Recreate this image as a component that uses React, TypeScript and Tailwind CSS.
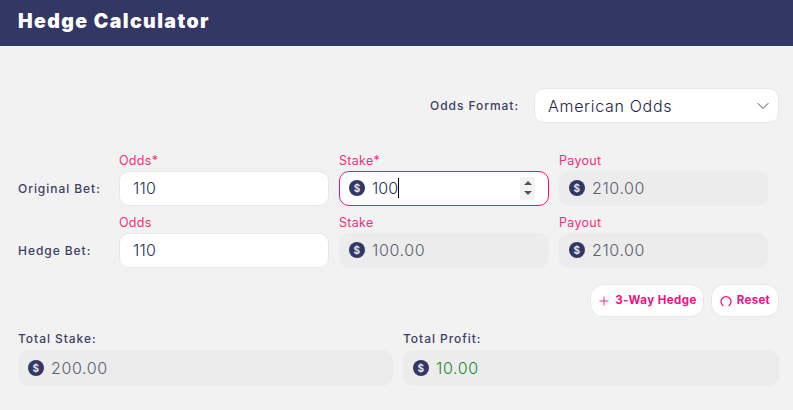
import React from 'react';
import { ChevronDown, Plus } from 'lucide-react';

const font = "font-['Inter','Liberation_Sans',sans-serif]";

const DollarIcon = () => (
  <span className="flex h-4 w-4 flex-none items-center justify-center rounded-full bg-[#333763] text-[10px] font-bold leading-none text-[#e4e5ee]">
    $
  </span>
);

const FieldLabel = ({ children }: { children: React.ReactNode }) => (
  <div className="mb-[3px] h-[14px] text-[12.5px] leading-[13px] tracking-[0.3px] text-[#f0307f]">{children}</div>
);

const OddsInput = ({ label, value }: { label: string; value: string }) => (
  <div className="w-[210px]">
    <FieldLabel>{label}</FieldLabel>
    <div className="flex h-[35px] items-center rounded-[10px] border border-[#e8e8e8] bg-white pb-[1px] pl-[13px] text-[16px] font-light tracking-[0.2px] text-[#2c2f52]">
      {value}
    </div>
  </div>
);

const ReadOnly = ({ label, value, width }: { label: string; value: string; width: string }) => (
  <div className={width}>
    <FieldLabel>{label}</FieldLabel>
    <div className="flex h-[35px] items-center gap-[7px] rounded-[10px] bg-[#ececec] pb-[1px] pl-[10px] text-[16px] font-light tracking-[0.6px] text-[#5c606c]">
      <DollarIcon />
      {value}
    </div>
  </div>
);

const Total = ({ label, value, color, width }: { label: string; value: string; color: string; width: string }) => (
  <div className={width}>
    <div className="mb-[4px] h-[14px] text-[12px] font-medium leading-[14px] tracking-[0.95px] text-[#3d4060]">{label}</div>
    <div className={`flex h-[36px] items-center gap-[7px] rounded-[10px] bg-[#ececec] pb-[1px] pl-[10px] text-[16px] font-light tracking-[0.6px] ${color}`}>
      <DollarIcon />
      {value}
    </div>
  </div>
);

const RowLabel = ({ children }: { children: React.ReactNode }) => (
  <div className="flex h-[35px] w-[101px] flex-none items-center text-[12px] font-medium tracking-[0.95px] text-[#3d4060]">
    {children}
  </div>
);

export default function App() {
  return (
    <div className={`${font} h-[410px] w-[793px] overflow-hidden bg-[#f2f2f2]`}>
      <header className="flex h-[46px] items-center bg-[#333763] pb-[2px] pl-[18px] text-[19.5px] font-black tracking-[1.4px] text-white">
        Hedge Calculator
      </header>

      <div className="pl-[18px] pr-[14px] pt-[42px]">
        <div className="flex items-center justify-end">
          <span className="mr-[15px] text-[12px] font-medium tracking-[0.95px] text-[#3d4060]">Odds Format:</span>
          <div className="flex h-[35px] w-[245px] items-center justify-between rounded-[10px] border border-[#e8e8e8] bg-white pl-[13px] pr-[5px] text-[16px] font-light tracking-[0.7px] text-[#1f2245]">
            American Odds
            <ChevronDown size={20} strokeWidth={1.2} className="text-[#4a4d6a]" />
          </div>
        </div>

        <div className="mt-[31px] flex items-end">
          <RowLabel>Original Bet:</RowLabel>
          <div className="flex gap-[10px]">
            <OddsInput label="Odds*" value="110" />
            <div className="w-[210px]">
              <FieldLabel>Stake*</FieldLabel>
              <div className="flex h-[35px] items-center justify-between rounded-[10px] border-[1.5px] border-[#f0107f] bg-white pb-[1px] pl-[9px] pr-[13px] text-[16px] font-light text-[#2c2f52]">
                <div className="flex items-center gap-[7px]">
                  <DollarIcon />
                  <span className="border-r border-black leading-[20px]">100</span>
                </div>
                <div className="flex h-[23px] w-[15px] flex-col items-center justify-center gap-[6px] bg-[#f2f2f2]">
                  <span className="h-0 w-0 border-x-[4px] border-b-[4px] border-x-transparent border-b-[#555555]" />
                  <span className="h-0 w-0 border-x-[4px] border-t-[4px] border-x-transparent border-t-[#555555]" />
                </div>
              </div>
            </div>
            <ReadOnly label="Payout" value="210.00" width="w-[209px]" />
          </div>
        </div>

        <div className="mt-[10px] flex items-end">
          <RowLabel>Hedge Bet:</RowLabel>
          <div className="flex gap-[10px]">
            <OddsInput label="Odds" value="110" />
            <ReadOnly label="Stake" value="100.00" width="w-[210px]" />
            <ReadOnly label="Payout" value="210.00" width="w-[209px]" />
          </div>
        </div>

        <div className="mt-[16px] flex justify-end gap-[7px]">
          <button className="flex h-[33px] w-[114px] items-center justify-center gap-[4px] rounded-[13px] border border-[#e8e8e8] bg-white text-[11.5px] font-bold tracking-[0.45px] text-[#f0107f]">
            <Plus size={14} strokeWidth={1.5} />
            3-Way Hedge
          </button>
          <button className="flex h-[33px] w-[68px] items-center justify-center gap-[5px] rounded-[13px] border border-[#e8e8e8] bg-white text-[11.5px] font-bold tracking-[0.3px] text-[#f0107f]">
            <svg width="12" height="12" viewBox="0 0 12 12" fill="none" stroke="currentColor" strokeWidth="1.3" strokeLinecap="round">
              <path d="M2.9 10.6A5 5 0 1 1 9.1 10.6" />
            </svg>
            Reset
          </button>
        </div>

        <div className="mt-[15px] flex gap-[10px]">
          <Total label="Total Stake:" value="200.00" color="text-[#5c606c]" width="w-[375px]" />
          <Total label="Total Profit:" value="10.00" color="text-[#1d8a2e]" width="w-[376px]" />
        </div>
      </div>
    </div>
  );
}
